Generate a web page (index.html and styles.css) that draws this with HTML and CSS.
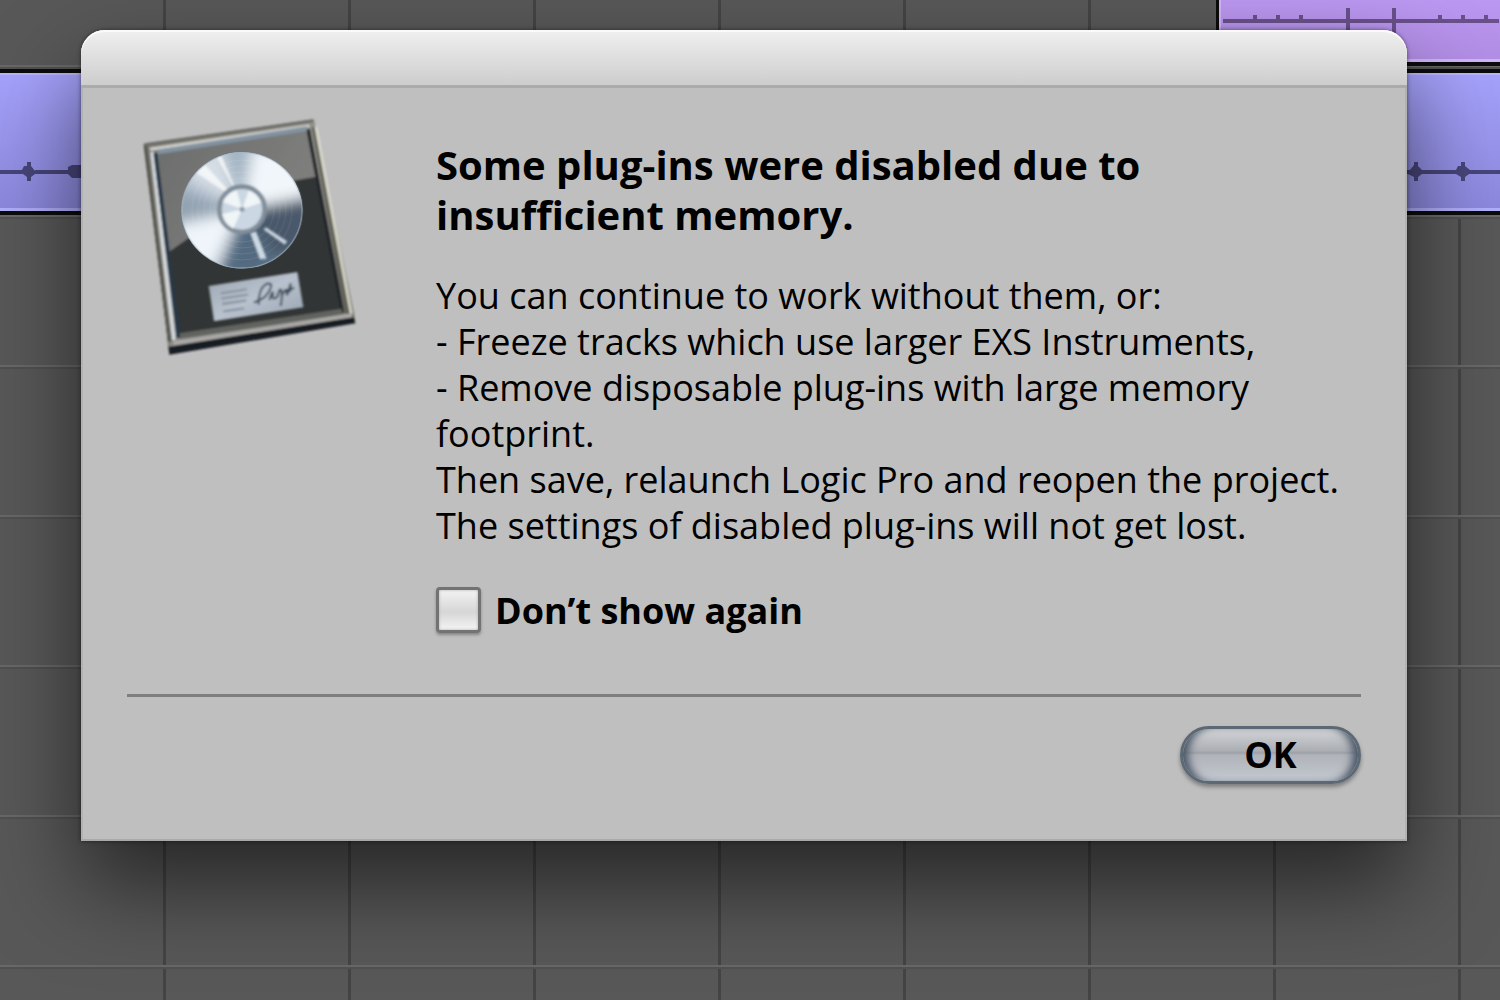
FILE: index.html
```html
<!DOCTYPE html>
<html lang="en">
<head>
<meta charset="utf-8">
<meta name="viewport" content="width=device-width, initial-scale=1">
<title>Logic Pro</title>
<link rel="stylesheet" href="styles.css">
</head>
<body>
<main class="workspace">
  <div class="arrange" aria-hidden="true">
    <div class="lane">
      <div class="region region-purple">
        <svg class="wave" width="280" height="60" viewBox="0 0 280 60">
          <g fill="#68508a">
            <path d="M4 19h276v4H4zM127 8h4v26h-4zM173 8h4v26h-4z"/>
            <path d="M34 15h4v4h-4zM57 15h4v4h-4zM80 15h4v4h-4zM219 15h4v4h-4zM242 15h4v4h-4zM265 15h4v4h-4z"/>
          </g>
        </svg>
      </div>
    </div>
    <div class="region region-blue">
      <svg class="wave" width="90" height="40" viewBox="0 0 90 40">
        <path fill="#48457a" d="M0 18h22l2-4h3v-4h4v4l4 5v3l-4 3v4h-4v-4l-4-3H0zM35 18h33v-3l4-2h9v13h-9l-4-4H35z"/>
      </svg>
      <svg class="wave" width="100" height="40" viewBox="0 0 100 40">
        <path fill="#48457a" d="M0 18h10l4-5v-3h4v4l4 4h34l2-4h3v-4h4v4l5 4h30v4H69l-4 3v4h-4v-4l-5-3H22l-4 3v4h-4v-4l-6-3H0z"/>
      </svg>
    </div>
  </div>

  <section class="dialog" role="alertdialog" aria-labelledby="title" aria-describedby="message">
    <div class="titlebar"></div>
    <div class="content">
      <svg class="app-icon" viewBox="60 50 660 730" aria-hidden="true">
        <defs>
          <linearGradient id="frame" x1="0" y1="0" x2="1" y2="1">
            <stop offset="0" stop-color="#77756f"/><stop offset=".45" stop-color="#94938d"/><stop offset="1" stop-color="#6c6c65"/>
          </linearGradient>
          <linearGradient id="glass" x1="0" y1="0" x2="1" y2=".5">
            <stop offset="0" stop-color="#6b6d6c"/><stop offset="1" stop-color="#80807e"/>
          </linearGradient>
          <linearGradient id="plate" x1="0" y1="0" x2="1" y2="1">
            <stop offset="0" stop-color="#9aa5b1"/><stop offset=".5" stop-color="#b8c2ce"/><stop offset="1" stop-color="#98a3b1"/>
          </linearGradient>
          <clipPath id="disc"><ellipse cx="366" cy="333" rx="181" ry="174"/></clipPath>
          <filter id="soft" x="-20%" y="-20%" width="140%" height="140%"><feGaussianBlur stdDeviation="20"/></filter>
          <filter id="edge"><feGaussianBlur stdDeviation="3"/></filter>
        </defs>
        <g filter="url(#edge)">
          <path d="M72 138L580 64L706 672L148 766z" fill="#151a21"/>
          <path d="M70 134L582 60L704 652L146 742z" fill="url(#frame)"/>
          <path d="M76 138L150 728" stroke="#54544e" stroke-width="9"/>
          <path d="M74 136L580 64" stroke="#6b6b66" stroke-width="8"/>
          <path d="M90 150L568 80" stroke="#d0d0cd" stroke-width="9"/>
          <path d="M96 158L162 722" stroke="#d6dade" stroke-width="10"/>
          <path d="M588 82L694 644" stroke="#deddcf" stroke-width="7"/>
          <path d="M579 84L682 644" stroke="#5b5a50" stroke-width="7"/>
          <path d="M160 732L696 648" stroke="#aaa9a7" stroke-width="12"/>
          <path d="M106 160L568 86L668 640L174 716z" fill="#333536"/>
          <path d="M106 160L562 86L588 232L430 260L146 458z" fill="url(#glass)"/>
          <path d="M112 158L562 88" stroke="#8293a1" stroke-width="14"/>
          <path d="M106 162L176 716" stroke="#283848" stroke-width="12"/>
          <path d="M565 92L668 640" stroke="#23282c" stroke-width="11"/>
          <path d="M180 710L666 636" stroke="#61635f" stroke-width="16"/>
        </g>
        <g clip-path="url(#disc)">
          <rect x="180" y="150" width="370" height="370" fill="#aab8c7"/>
          <g filter="url(#soft)">
            <path d="M366 332L180 230L240 130L300 130z" fill="#d5dde5"/>
            <path d="M366 332L300 130L390 130z" fill="#a2b4c3"/>
            <path d="M366 332L400 140L570 160L570 290z" fill="#f1f6fa"/>
            <path d="M366 332L580 290L580 430L480 490z" fill="#48596b"/>
            <path d="M366 332L480 490L420 540L290 540z" fill="#526b80"/>
            <path d="M366 332L270 530L150 470L150 380z" fill="#eff5fa"/>
            <path d="M366 332L150 380L150 270z" fill="#93a2b1"/>
          </g>
          <g filter="url(#edge)">
            <path d="M220 215L245 185L350 300zM285 165l15-5L360 300z" fill="#fff" opacity=".7"/>
            <path d="M390 400L420 480L440 478L408 396zM430 390L494 436L502 426L438 384z" fill="#e0ebf3" opacity=".85"/>
          </g>
          <g fill="none" stroke="#fff" opacity=".1" stroke-width="3"><circle cx="366" cy="332" r="96"/><circle cx="366" cy="332" r="114"/><circle cx="366" cy="332" r="132"/><circle cx="366" cy="332" r="150"/></g>
        </g>
        <ellipse cx="366" cy="333" rx="180" ry="173" fill="none" stroke="#a9b9c8" stroke-width="4" opacity=".6"/>
        <g filter="url(#edge)">
          <circle cx="366" cy="330" r="68" fill="#cbd7e2" stroke="#808d9a" stroke-width="14"/>
          <path d="M366 330L308 308A62 62 0 0 1 350 272zM366 330L386 273A62 62 0 0 1 424 310zM366 330L340 388A62 62 0 0 1 306 344z" fill="#f0f5f8"/>
          <circle cx="366" cy="330" r="8" fill="#929da7"/>
          <path d="M266 560L532 518L550 624L282 666z" fill="url(#plate)"/>
          <path d="M302 582l78-12M304 598l80-12M307 614l72-11M310 636l62-9" stroke="#8b96a3" stroke-width="7"/>
          <path d="M402 610l20-10M416 616q-2-46 22-62q26-8 8 24q-14 20-24 22M448 602q12-36 10-16t14 6q8-30 12-18t-2 46M486 588q14-28 14-8t12-28l-2 26M492 574l30-8" fill="none" stroke="#414d5b" stroke-width="6"/>
        </g>
      </svg>
      <div class="copy">
        <h1 id="title">Some plug-ins were disabled due to<br>insufficient memory.</h1>
        <p id="message">You can continue to work without them, or:<br>- Freeze tracks which use larger EXS Instruments,<br>- Remove disposable plug-ins with large memory<br>footprint.<br>Then save, relaunch Logic Pro and reopen the project.<br>The settings of disabled plug-ins will not get lost.</p>
        <label class="option" for="hide"><input type="checkbox" id="hide">Don’t show again</label>
      </div>
    </div>
    <div class="actions">
      <button type="button" class="ok">OK</button>
    </div>
  </section>
</main>
</body>
</html>
```
FILE: styles.css
```css
* { box-sizing: border-box; }

body {
  margin: 0;
  background: #585858;
  color: #000;
  font-family: "Open Sans", "Noto Sans", sans-serif;
}

.workspace {
  display: grid;
  min-height: 100vh;
  overflow: hidden;
}

.arrange,
.dialog { grid-area: 1 / 1; min-width: 0; }

/* bar and track lines */
.arrange {
  background:
    repeating-linear-gradient(to bottom, #686868 0 2px, #505050 2px 4px, transparent 4px 150px) 0 65px,
    repeating-linear-gradient(to right, #444 0 3px, transparent 3px 185px) 163px 0,
    #585858;
  background-repeat: repeat;
  background-size: 100% 150px, 185px 100%, auto;
}

.lane {
  display: flex;
  justify-content: flex-end;
  height: 69px;
}

.region {
  display: flex;
  border: 3px solid #0c0c0c;
}

.region-purple {
  width: 284px;
  height: 66px;
  border-width: 0 0 4px 3px;
  background: linear-gradient(#bb98f1, #b18de4);
  box-shadow: inset 2px -3px #d0b4f8;
}

.region-blue {
  justify-content: space-between;
  height: 146px;
  padding-top: 79px;
  border-width: 4px 0;
  background: linear-gradient(#a5a2fc, #8b88dc);
  box-shadow: inset 0 2px #b7b4ff, inset 0 -3px #b1aefb;
}

.wave { display: block; flex: none; }

.dialog {
  align-self: start;
  margin: 30px 93px 40px 81px;
  padding-bottom: 57px;
  background: #bfbfbf;
  border-radius: 24px 24px 0 0;
  box-shadow:
    inset 0 -2px #aaa,
    inset 2px 0 #b2b2b2,
    inset -2px 0 #b2b2b2,
    0 0 4px rgba(0, 0, 0, .5),
    0 44px 90px rgba(0, 0, 0, .56);
}

.titlebar {
  height: 58px;
  border-bottom: 3px solid #ababab;
  border-radius: 24px 24px 0 0;
  background: linear-gradient(#f0f0f0, #cdcdcd);
  box-shadow: inset 0 2px #fafafa;
}

.content {
  display: grid;
  grid-template-columns: 220px 1fr;
  column-gap: 76px;
  padding: 28px 46px 61px 59px;
}

.app-icon { width: 220px; }

.copy { padding-top: 24px; }

h1, p { margin: 0; }

h1 {
  font-size: 40px;
  line-height: 50px;
  font-weight: 700;
}

p {
  margin-top: 33px;
  font-size: 36px;
  line-height: 46px;
}

.option {
  display: flex;
  align-items: center;
  gap: 14px;
  height: 46px;
  margin-top: 38px;
  font-size: 36px;
  font-weight: 700;
}

.option input {
  appearance: none;
  width: 45px;
  height: 46px;
  margin: 0;
  border: 3px solid #737373;
  border-radius: 4px;
  background: linear-gradient(#f3f3f3, #d6d6d6 55%, #f4f4f4);
  box-shadow: 0 2px 3px rgba(0, 0, 0, .3), inset 0 0 3px #aaa;
}

.option input:checked { background: #4d5a69; }

.actions {
  display: flex;
  justify-content: flex-end;
  margin: 0 46px;
  padding-top: 29px;
  border-top: 3px solid #7f7f7f;
}

.ok {
  width: 181px;
  height: 58px;
  padding: 0;
  border: 3px solid #5d6875;
  border-radius: 29px;
  background: linear-gradient(#d3d5d8, #abaeb3 42%, #9da1a7 46%, #b0b3b9 50%, #c3c8d0);
  box-shadow:
    0 3px 4px rgba(0, 0, 0, .35),
    inset 10px 0 8px -5px #465364,
    inset -10px 0 8px -5px #465364;
  color: #000;
  font: 700 36px/50px "Open Sans", "Noto Sans", sans-serif;
}

.option input:focus-visible,
.ok:focus-visible { outline: 3px solid #5b8bd0; outline-offset: 2px; }
```
